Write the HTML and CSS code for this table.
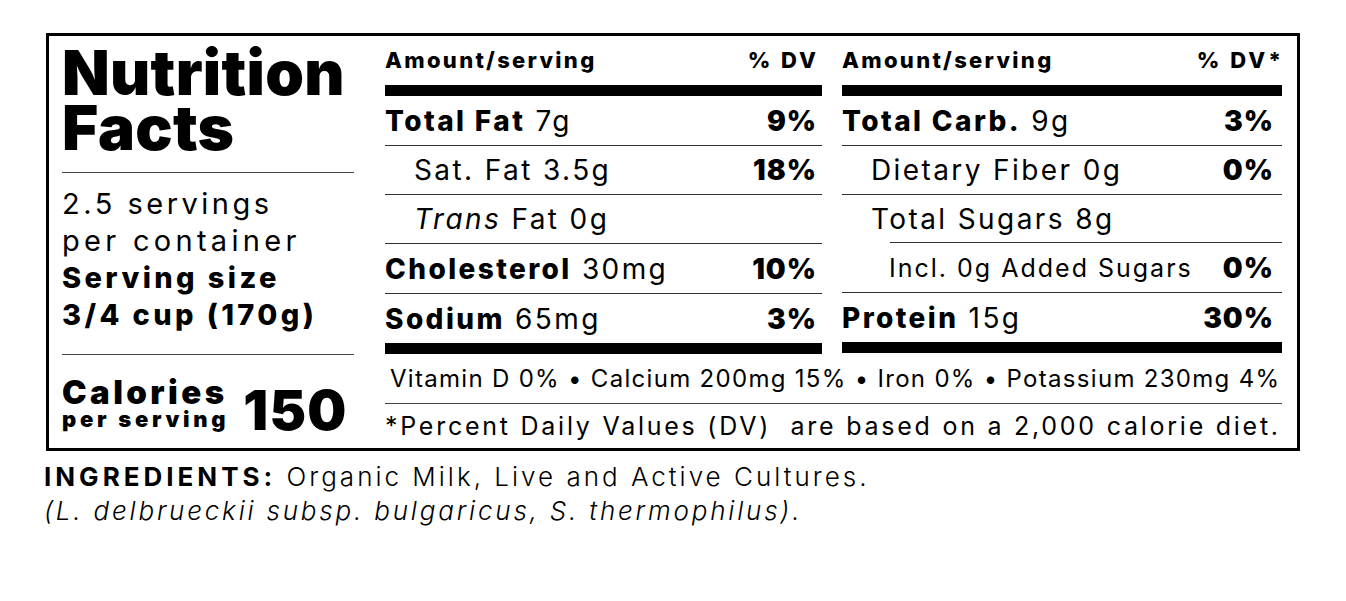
FILE: index.html
```html
<!DOCTYPE html>
<html lang="en">
<head>
<meta charset="utf-8">
<title>Nutrition Facts</title>
<link rel="stylesheet" href="styles.css">
</head>
<body>
<div class="label">
  <div class="left">
    <h1 class="title">Nutrition<br>Facts</h1>
    <div class="servings">
      <div class="serv-light">2.5 servings<br><span class="l2">per container</span></div>
      <div class="serv-bold">Serving size<br>3/4 cup (170g)</div>
    </div>
    <div class="calories">
      <div class="cal-label">
        <span class="cal-big">Calories</span>
        <span class="cal-small">per serving</span>
      </div>
      <div class="cal-num">150</div>
    </div>
  </div>
  <div class="right">
    <div class="cols">
      <div class="col col-a">
        <div class="head"><span>Amount/serving</span><span class="dv">% DV</span></div>
        <div class="row r1"><span><b>Total Fat</b> 7g</span><b class="pct">9%</b></div>
        <div class="row r2 sub"><span>Sat. Fat 3.5g</span><b class="pct">18%</b></div>
        <div class="row r3 sub"><span><i>Trans</i> Fat 0g</span></div>
        <div class="row r4"><span><b>Cholesterol</b> 30mg</span><b class="pct">10%</b></div>
        <div class="row r5"><span><b>Sodium</b> 65mg</span><b class="pct">3%</b></div>
      </div>
      <div class="col col-b">
        <div class="head"><span>Amount/serving</span><span class="dv">% DV*</span></div>
        <div class="row r1"><span><b>Total Carb.</b> 9g</span><b class="pct">3%</b></div>
        <div class="row r2 sub"><span>Dietary Fiber 0g</span><b class="pct">0%</b></div>
        <div class="row r3 sub rule-indent"><span>Total Sugars 8g</span></div>
        <div class="row r4 subsub"><span class="small">Incl. 0g Added Sugars</span><b class="pct">0%</b></div>
        <div class="row r5"><span><b>Protein</b> 15g</span><b class="pct">30%</b></div>
      </div>
    </div>
    <div class="vitamins">Vitamin D 0% • Calcium 200mg 15% • Iron 0% • Potassium 230mg 4%</div>
    <div class="footnote">*Percent Daily Values (DV)&nbsp; are based on a 2,000 calorie diet.</div>
  </div>
</div>
<div class="ingredients">
  <p class="ing-line ing-first"><b>INGREDIENTS:</b> Organic Milk, Live and Active Cultures.</p>
  <p class="ing-line ing-italic">(L. delbrueckii subsp. bulgaricus, S. thermophilus).</p>
</div>
</body>
</html>
```
FILE: styles.css
```css
html, body {
  margin: 0;
  padding: 0;
  background: #fff;
  color: #000;
  font-family: Inter, "Noto Sans", "DejaVu Sans", sans-serif;
}

.label {
  margin: 33px 0 0 46px;
  width: 1254px;
  height: 418px;
  box-sizing: border-box;
  border: 3px solid #000;
  display: flex;
  padding: 0 15px 0 13px;
}

/* left column */
.left {
  width: 292px;
  margin-right: 31px;
  display: flex;
  flex-direction: column;
}

.title {
  margin: 0 0 17px;
  padding-top: 9px;
  font-size: 62px;
  line-height: 55px;
  font-weight: 900;
  letter-spacing: 0.3px;
}

.servings {
  border-top: 1px solid #444;
  border-bottom: 1px solid #444;
  padding: 12px 0 21px;
  font-size: 29px;
  line-height: 37px;
  white-space: nowrap;
}

.serv-light {
  font-weight: 400;
  letter-spacing: 3.5px;
}

.serv-light .l2 { letter-spacing: 4.3px; }

.serv-bold {
  font-weight: 800;
  letter-spacing: 3.4px;
}

.calories {
  display: flex;
  align-items: flex-end;
  gap: 14px;
  padding-top: 21px;
}

.cal-label {
  display: flex;
  flex-direction: column;
  font-weight: 900;
}

.cal-big {
  font-size: 33px;
  line-height: 32px;
  letter-spacing: 3.4px;
}

.cal-small {
  font-size: 22px;
  line-height: 22px;
  letter-spacing: 3.7px;
}

.cal-num {
  font-size: 55px;
  line-height: 40px;
  font-weight: 900;
  letter-spacing: 1.3px;
}

/* right area */
.right {
  flex: 1;
  display: flex;
  flex-direction: column;
}

.cols {
  display: grid;
  grid-template-columns: 437px 440px;
  column-gap: 20px;
}

.head {
  height: 47px;
  padding-bottom: 2px;
  border-bottom: 11px solid #000;
  display: flex;
  justify-content: space-between;
  align-items: center;
  font-size: 22px;
  font-weight: 800;
  letter-spacing: 2.3px;
}

.head .dv { letter-spacing: 3px; margin-right: -3px; }

.col-a .head { padding-right: 6px; }
.col-b .head { padding-right: 1px; }

.row {
  height: 49px;
  border-bottom: 1px solid #333;
  display: flex;
  justify-content: space-between;
  align-items: center;
  font-size: 28px;
  font-weight: 400;
  letter-spacing: 2.4px;
  white-space: nowrap;
}

.row.r2, .row.r3 { height: 48px; }

.row.r5 {
  border-bottom: 11px solid #000;
}

.col-a .row { padding-right: 6px; }
.col-b .row { padding-right: 9px; }

.row b { font-weight: 800; }

.row .pct {
  font-weight: 900;
  letter-spacing: 1px;
  margin-right: -1px;
}

.row .small {
  font-size: 25px;
  letter-spacing: 2px;
}

.sub { padding-left: 29px; }
.subsub { padding-left: 47px; }

.rule-indent {
  border-bottom: none;
  background: linear-gradient(#333, #333) no-repeat right bottom / calc(100% - 48px) 1px;
  height: 49px;
}

.vitamins {
  height: 49px;
  border-bottom: 1px solid #444;
  padding-left: 5px;
  display: flex;
  align-items: center;
  font-size: 24px;
  font-weight: 400;
  letter-spacing: 1.3px;
  white-space: nowrap;
}

.footnote {
  flex: 1;
  display: flex;
  align-items: center;
  font-size: 25px;
  font-weight: 400;
  letter-spacing: 2.75px;
  white-space: nowrap;
}

/* ingredients */
.ingredients {
  margin: 9px 0 0 44px;
  font-size: 26px;
  font-weight: 300;
  line-height: 34px;
  letter-spacing: 2.8px;
  white-space: nowrap;
}

.ing-line {
  margin: 0;
}

.ing-first {
  letter-spacing: 3px;
}

.ing-line b {
  font-weight: 700;
  letter-spacing: 4px;
}

.ing-italic {
  font-style: italic;
}
```
